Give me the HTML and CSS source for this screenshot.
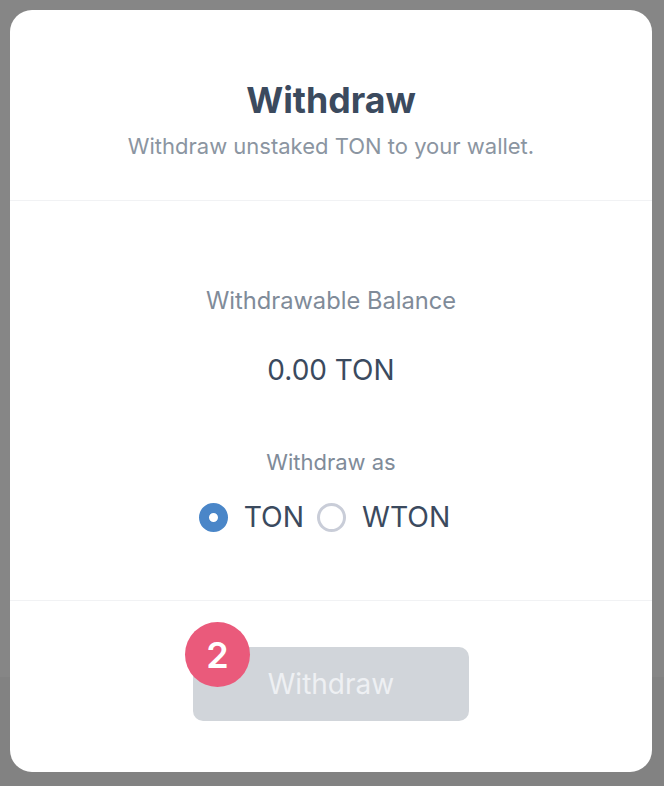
FILE: index.html
```html
<!DOCTYPE html>
<html lang="en">
<head>
<meta charset="utf-8">
<title>Withdraw</title>
<link rel="stylesheet" href="styles.css">
</head>
<body>
<div class="modal">
  <header class="modal-head">
    <h1 class="title">Withdraw</h1>
    <p class="subtitle">Withdraw unstaked TON to your wallet.</p>
  </header>
  <section class="modal-body">
    <div class="label">Withdrawable Balance</div>
    <div class="amount">0.00 TON</div>
    <div class="label as">Withdraw as</div>
    <div class="options">
      <label class="option"><span class="radio checked"></span><span>TON</span></label>
      <label class="option"><span class="radio"></span><span>WTON</span></label>
    </div>
  </section>
  <footer class="modal-foot">
    <div class="btn-wrap">
      <button class="btn" disabled>Withdraw</button>
      <span class="badge">2</span>
    </div>
  </footer>
</div>
</body>
</html>
```
FILE: styles.css
```css
html, body {
  margin: 0;
  padding: 0;
}
body {
  width: 664px;
  height: 786px;
  background: linear-gradient(to bottom, #868686 0, #868686 677px, #828282 677px, #828282 100%);
  font-family: Inter, "Noto Sans", sans-serif;
  padding: 10px 12px 14px 10px;
  box-sizing: border-box;
}
.modal {
  background: #ffffff;
  border-radius: 22px;
  height: 762px;
  display: flex;
  flex-direction: column;
  overflow: hidden;
}
.modal-head {
  padding: 68px 20px 40px;
  text-align: center;
  border-bottom: 1px solid #f1f2f4;
}
.title {
  margin: 0;
  font-size: 35.7px;
  line-height: 44px;
  font-weight: 700;
  color: #3b4a5e;
}
.subtitle {
  margin: 10px 0 0;
  font-size: 22px;
  line-height: 28px;
  color: #8b95a1;
}
.modal-body {
  padding: 86px 20px 65px;
  display: flex;
  flex-direction: column;
  align-items: center;
  border-bottom: 1px solid #f1f2f4;
}
.label {
  font-size: 23.7px;
  line-height: 28px;
  color: #808b99;
}
.amount {
  margin-top: 38px;
  font-size: 28px;
  line-height: 34px;
  color: #3b4a5e;
}
.label.as {
  margin-top: 61px;
  font-size: 22px;
}
.options {
  margin-top: 23px;
  padding-right: 13px;
  display: flex;
  gap: 13px;
  font-size: 28.3px;
  line-height: 36px;
  color: #3b4a5e;
}
.option {
  display: flex;
  align-items: center;
  gap: 16px;
}
.radio {
  width: 29px;
  height: 29px;
  box-sizing: border-box;
  border-radius: 50%;
  border: 3px solid #c9cdd8;
  background: #fff;
}
.radio.checked {
  border: 10px solid #4a86c8;
}
.modal-foot {
  flex: 1;
  display: flex;
  justify-content: center;
  padding-top: 46px;
}
.btn-wrap {
  position: relative;
  height: 74px;
}
.btn {
  width: 276px;
  height: 74px;
  border: none;
  border-radius: 10px;
  background: #d1d5da;
  color: #eef0f3;
  font-family: Inter, "Noto Sans", sans-serif;
  font-size: 28px;
  padding: 0;
}
.badge {
  position: absolute;
  left: -8px;
  top: -25px;
  width: 65px;
  height: 65px;
  border-radius: 50%;
  background: #ea5a7b;
  color: #fff;
  font-size: 36px;
  font-weight: 600;
  display: flex;
  align-items: center;
  justify-content: center;
}
```
